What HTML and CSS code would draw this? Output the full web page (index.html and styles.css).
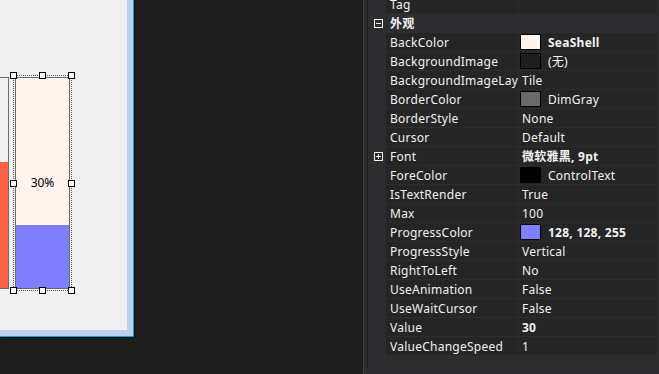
FILE: index.html
```html
<!DOCTYPE html>
<html lang="zh-CN">
<head>
  <meta charset="UTF-8">
  <meta name="viewport" content="width=device-width, initial-scale=1.0">
  <title>ProgressBar Designer</title>
  <link rel="stylesheet" href="styles.css">
</head>
<body>
  <div class="workspace">
    <div class="designer">
      <div class="form-frame">
        <div class="form">
          <div class="bar bar-plain">
            <div class="fill fill-tomato" style="height: 60%"></div>
          </div>
          <div class="bar bar-selected">
            <div class="fill fill-blue" style="height: 30%"></div>
            <span class="bar-label">30%</span>
            <div class="sel-outline">
              <span class="handle h-tl"></span>
              <span class="handle h-tc"></span>
              <span class="handle h-tr"></span>
              <span class="handle h-ml"></span>
              <span class="handle h-mr"></span>
              <span class="handle h-bl"></span>
              <span class="handle h-bc"></span>
              <span class="handle h-br"></span>
            </div>
          </div>
        </div>
      </div>
    </div>

    <div class="props">
      <div class="grid">
        <div class="row">
          <div class="gutter"></div>
          <div class="name">Tag</div>
          <div class="value"></div>
        </div>
        <div class="row category">
          <div class="gutter">
            <svg class="toggle" width="9" height="9" viewBox="0 0 9 9"><rect x="0.5" y="0.5" width="8" height="8" fill="none" stroke="#f1f1f1"/><path d="M2 4.5h5" stroke="#f1f1f1"/></svg>
          </div>
          <div class="name">外观</div>
        </div>
        <div class="row">
          <div class="gutter"></div>
          <div class="name">BackColor</div>
          <div class="value"><span class="swatch sw-seashell"></span><b>SeaShell</b></div>
        </div>
        <div class="row">
          <div class="gutter"></div>
          <div class="name">BackgroundImage</div>
          <div class="value"><span class="swatch sw-empty"></span>(无)</div>
        </div>
        <div class="row">
          <div class="gutter"></div>
          <div class="name">BackgroundImageLay</div>
          <div class="value text">Tile</div>
        </div>
        <div class="row">
          <div class="gutter"></div>
          <div class="name">BorderColor</div>
          <div class="value"><span class="swatch sw-dimgray"></span>DimGray</div>
        </div>
        <div class="row">
          <div class="gutter"></div>
          <div class="name">BorderStyle</div>
          <div class="value text">None</div>
        </div>
        <div class="row">
          <div class="gutter"></div>
          <div class="name">Cursor</div>
          <div class="value text">Default</div>
        </div>
        <div class="row">
          <div class="gutter">
            <svg class="toggle" width="9" height="9" viewBox="0 0 9 9"><rect x="0.5" y="0.5" width="8" height="8" fill="none" stroke="#f1f1f1"/><path d="M2 4.5h5M4.5 2v5" stroke="#f1f1f1"/></svg>
          </div>
          <div class="name">Font</div>
          <div class="value text"><b>微软雅黑, 9pt</b></div>
        </div>
        <div class="row">
          <div class="gutter"></div>
          <div class="name">ForeColor</div>
          <div class="value"><span class="swatch sw-black"></span>ControlText</div>
        </div>
        <div class="row">
          <div class="gutter"></div>
          <div class="name">IsTextRender</div>
          <div class="value text">True</div>
        </div>
        <div class="row">
          <div class="gutter"></div>
          <div class="name">Max</div>
          <div class="value text">100</div>
        </div>
        <div class="row">
          <div class="gutter"></div>
          <div class="name">ProgressColor</div>
          <div class="value"><span class="swatch sw-blue"></span><b>128, 128, 255</b></div>
        </div>
        <div class="row">
          <div class="gutter"></div>
          <div class="name">ProgressStyle</div>
          <div class="value text">Vertical</div>
        </div>
        <div class="row">
          <div class="gutter"></div>
          <div class="name">RightToLeft</div>
          <div class="value text">No</div>
        </div>
        <div class="row">
          <div class="gutter"></div>
          <div class="name">UseAnimation</div>
          <div class="value text">False</div>
        </div>
        <div class="row">
          <div class="gutter"></div>
          <div class="name">UseWaitCursor</div>
          <div class="value text">False</div>
        </div>
        <div class="row">
          <div class="gutter"></div>
          <div class="name">Value</div>
          <div class="value text"><b>30</b></div>
        </div>
        <div class="row">
          <div class="gutter"></div>
          <div class="name">ValueChangeSpeed</div>
          <div class="value text">1</div>
        </div>
      </div>
    </div>
  </div>
</body>
</html>
```

FILE: styles.css
```css
body {
  margin: 0;
  background-color: #1e1e1e;
  font-family: "Noto Sans", "Noto Sans CJK SC", sans-serif;
  font-size: 12px;
  overflow: hidden;
}
.workspace {
  display: flex;
  height: 374px;
}
.designer {
  width: 363px;
  flex-shrink: 0;
}
.form-frame {
  width: 133px;
  border-right: 1px solid #1ba1e2;
  border-bottom: 1px solid #1ba1e2;
  box-shadow: 1px 1px 0 #0a0a0a;
}
.form {
  width: 127px;
  height: 253px;
  padding-top: 77px;
  background-color: #f0f0f0;
  border-right: 6px solid #b9d1ea;
  border-bottom: 6px solid #b9d1ea;
  display: flex;
  align-items: flex-start;
  gap: 6px;
  overflow: hidden;
}
.bar {
  flex-shrink: 0;
  width: 55px;
  height: 212px;
  box-sizing: border-box;
  border: 1px solid #696969;
  display: grid;
  grid-template: 1fr / 1fr;
  position: relative;
}
.bar-plain {
  margin-left: -46px;
}
.bar-selected {
  background-color: #fff5ee;
}
.fill {
  grid-area: 1 / 1;
  align-self: end;
}
.fill-tomato {
  background-color: #ff6347;
}
.fill-blue {
  background-color: #8080ff;
}
.bar-label {
  grid-area: 1 / 1;
  align-self: center;
  justify-self: center;
  color: #000;
  line-height: 14px;
}
.sel-outline {
  position: absolute;
  left: -3px;
  top: -3px;
  width: 59px;
  height: 216px;
  box-sizing: border-box;
  border: 1px dotted #5a5a5a;
}
.handle {
  position: absolute;
  width: 7px;
  height: 7px;
  box-sizing: border-box;
  background-color: #fff;
  border: 1px solid #000;
}
.h-tl, .h-ml, .h-bl { left: -4px; }
.h-tc, .h-bc { left: 25px; }
.h-tr, .h-mr, .h-br { left: 54px; }
.h-tl, .h-tc, .h-tr { top: -4px; }
.h-ml, .h-mr { top: 104px; }
.h-bl, .h-bc, .h-br { top: 211px; }

.props {
  flex: 1;
  background-color: #2d2d30;
  border-left: 1px solid #3f3f46;
  padding-left: 3px;
}
.grid {
  height: 100%;
  border-left: 1px solid #1f1f1f;
  background-color: #2d2d30;
  margin-top: -5px;
  color: #f1f1f1;
  letter-spacing: 0.25px;
}
.row {
  display: flex;
  height: 18px;
  margin-bottom: 1px;
  line-height: 18px;
}
.gutter {
  width: 18px;
  flex-shrink: 0;
  display: flex;
  align-items: flex-start;
  padding: 5px 0 0 6px;
  box-sizing: border-box;
}
.name {
  width: 132px;
  flex-shrink: 0;
  padding: 1px 0 0 4px;
  box-sizing: border-box;
  background-color: #252526;
  white-space: nowrap;
  overflow: hidden;
}
.value {
  width: 138px;
  flex-shrink: 0;
  margin-left: 1px;
  background-color: #252526;
  display: flex;
  align-items: flex-start;
  padding: 1px 0 0 1px;
  box-sizing: border-box;
  white-space: nowrap;
  overflow: hidden;
}
.value.text {
  padding-left: 3px;
}
.category .name {
  background-color: transparent;
  font-weight: bold;
}
.swatch {
  width: 21px;
  height: 16px;
  box-sizing: border-box;
  border: 1px solid #000;
  margin-right: 7px;
  flex-shrink: 0;
}
.sw-seashell { background-color: #fff5ee; }
.sw-empty { background-color: #1e1e1e; }
.sw-dimgray { background-color: #696969; }
.sw-black { background-color: #000; }
.sw-blue { background-color: #8080ff; }
```
